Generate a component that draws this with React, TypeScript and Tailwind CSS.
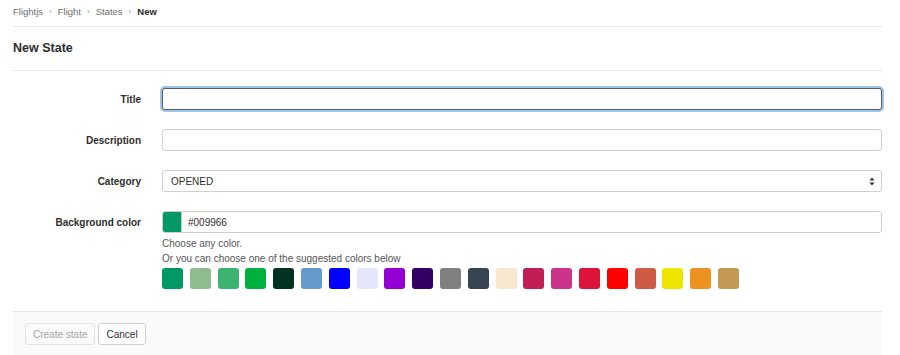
const colors = [
  '#009966', '#8fbc8f', '#3cb371', '#00b140', '#013220', '#6699cc', '#0000ff',
  '#e6e6fa', '#9400d3', '#330066', '#808080', '#36454f', '#f7e7ce', '#c21e56',
  '#cc338b', '#dc143c', '#ff0000', '#cd5b45', '#eee600', '#ed9121', '#c39953',
];

function Row({ label, children }: { label: string; children: React.ReactNode }) {
  return (
    <div className="flex items-start">
      <label className="h-[22px] w-[128px] shrink-0 text-right text-[10px] font-bold leading-[24px] text-[#2e2e2e]">
        {label}
      </label>
      <div className="ml-[21px] flex-1">{children}</div>
    </div>
  );
}

export default function App() {
  return (
    <div
      className="h-[355px] w-[900px] overflow-hidden bg-white pl-[13px] pr-[18px] text-[#2e2e2e]"
      style={{ fontFamily: '"Liberation Sans", Arial, sans-serif' }}
    >
      <nav className="flex h-[27px] items-center gap-[6px] border-b border-[#e8e8e8] pb-[5px] pt-[3px] text-[9.5px] text-[#6e6e6e]">
        <span>Flightjs</span>
        <span className="text-[8px] text-[#9a9a9a]">›</span>
        <span>Flight</span>
        <span className="text-[8px] text-[#9a9a9a]">›</span>
        <span>States</span>
        <span className="text-[8px] text-[#9a9a9a]">›</span>
        <span className="font-bold text-[#2e2e2e]">New</span>
      </nav>

      <h3 className="flex h-[44px] items-center border-b border-[#e8e8e8] text-[12.5px] font-bold">
        New State
      </h3>

      <form className="pt-[17px]">
        <div className="flex flex-col gap-[19px]">
          <Row label="Title">
            <input className="block h-[22px] w-full rounded-[3px] border border-[#5c5c5c] bg-white px-2 text-[10px] shadow-[0_0_0_2px_#9ec3ec] outline-none" />
          </Row>
          <Row label="Description">
            <input className="block h-[22px] w-full rounded-[3px] border border-[#cfcfcf] bg-white px-2 text-[10px] outline-none" />
          </Row>
          <Row label="Category">
            <div className="flex h-[22px] w-full items-center justify-between rounded-[3px] border border-[#cfcfcf] bg-white pl-[8px] pr-[6px] text-[10px]">
              <span>OPENED</span>
              <svg width="6" height="9" viewBox="0 0 6 9">
                <path d="M3 0.5L5.5 3.5H0.5Z M3 8.5L5.5 5.5H0.5Z" fill="#333" />
              </svg>
            </div>
          </Row>
          <Row label="Background color">
            <div className="flex h-[22px] w-full overflow-hidden rounded-[3px] border border-[#cfcfcf] bg-white">
              <div className="w-[18px] bg-[#009966]" />
              <div className="flex items-center border-l border-[#cfcfcf] pl-[6px] text-[10px]">#009966</div>
            </div>
            <p className="mt-[3px] text-[10px] leading-[15px] text-[#555]">Choose any color.</p>
            <p className="text-[10px] leading-[15px] text-[#555]">
              Or you can choose one of the suggested colors below
            </p>
            <div className="mt-[2px] flex gap-[6.8px]">
              {colors.map((c) => (
                <span
                  key={c}
                  className="block h-[21px] w-[21px] rounded-[3px]"
                  style={{ backgroundColor: c }}
                />
              ))}
            </div>
          </Row>
        </div>

        <div className="mt-[22px] flex h-[50px] gap-[3px] border-t border-[#e5e5e5] bg-[#fafafa] pl-[12px] pt-[11px]">
          <button
            type="button"
            disabled
            className="h-[22px] rounded-[3px] border border-[#e3e3e3] bg-[#fafafa] px-[7px] text-[10px] text-[#a7a7a7]"
          >
            Create state
          </button>
          <button
            type="button"
            className="h-[22px] rounded-[3px] border border-[#cfcfcf] bg-white px-[7px] text-[10px] text-[#2e2e2e]"
          >
            Cancel
          </button>
        </div>
      </form>
    </div>
  );
}
